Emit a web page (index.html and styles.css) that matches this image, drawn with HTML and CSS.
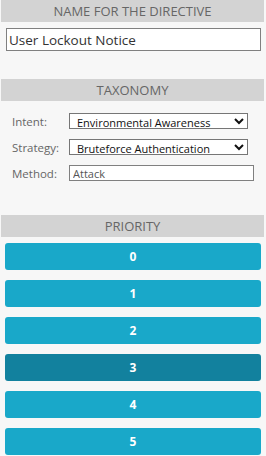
FILE: index.html
```html
<!DOCTYPE html>
<html>
<head>
    <meta charset="utf-8">
    <title>Directive</title>
    <link rel="stylesheet" href="styles.css">
</head>
<body>
    <div class="section">
        <div class="section-title">NAME FOR THE DIRECTIVE</div>
        <input class="name-input" type="text" value="User Lockout Notice">
    </div>

    <div class="section taxonomy">
        <div class="section-title">TAXONOMY</div>
        <div class="tax-rows">
            <div class="tax-row">
                <label>Intent:</label>
                <select class="tax-select">
                    <option>Environmental Awareness</option>
                </select>
            </div>
            <div class="tax-row">
                <label>Strategy:</label>
                <select class="tax-select">
                    <option>Bruteforce Authentication</option>
                </select>
            </div>
            <div class="tax-row">
                <label>Method:</label>
                <input class="tax-input" type="text" value="Attack">
            </div>
        </div>
    </div>

    <div class="section priority">
        <div class="section-title">PRIORITY</div>
        <div class="priority-list">
            <button class="priority-btn">0</button>
            <button class="priority-btn">1</button>
            <button class="priority-btn">2</button>
            <button class="priority-btn active">3</button>
            <button class="priority-btn">4</button>
            <button class="priority-btn">5</button>
        </div>
    </div>
</body>
</html>
```

FILE: styles.css
```css
body {
    margin: 0;
    padding: 0;
    background: #f7f7f7;
    font-family: 'Open Sans', 'Noto Sans', sans-serif;
    width: 266px;
    height: 456px;
    overflow: hidden;
}

.section {
    display: flex;
    flex-direction: column;
}

.section-title {
    height: 22px;
    line-height: 22px;
    margin: 0 2px 0 1px;
    background: #d3d3d3;
    color: #666;
    font-size: 13px;
    text-align: center;
}

.name-input {
    box-sizing: border-box;
    margin: 6px 0 0 6px;
    width: 255px;
    height: 23px;
    padding: 0 2px;
    border: 1px solid #808080;
    background: #fff;
    color: #333;
    font-family: 'Open Sans', sans-serif;
    font-size: 13.5px;
    outline: none;
}

.taxonomy {
    margin-top: 28px;
}

.tax-rows {
    display: flex;
    flex-direction: column;
    gap: 10px;
    padding: 12px 0 0 12px;
}

.tax-row {
    display: flex;
    align-items: center;
    height: 16px;
}

.tax-row label {
    width: 57px;
    color: #666;
    font-size: 11.5px;
}

.tax-select {
    box-sizing: border-box;
    width: 179px;
    height: 16px;
    padding: 0 0 0 3px;
    border: 1px solid #767676;
    border-radius: 0;
    background: #fff;
    color: #111;
    font-family: 'Open Sans', sans-serif;
    font-size: 11px;
}

.tax-input {
    box-sizing: border-box;
    width: 185px;
    height: 16px;
    padding: 0 3px;
    border: 1px solid #808080;
    background: #fff;
    color: #555;
    font-family: 'Open Sans', sans-serif;
    font-size: 11px;
    outline: none;
}

.priority {
    margin-top: 34px;
}

.priority-list {
    display: flex;
    flex-direction: column;
    gap: 10px;
    padding: 6px 5px 0 5px;
}

.priority-btn {
    height: 27px;
    border: none;
    border-radius: 3px;
    background: #19a8c9;
    color: #fff;
    font-family: 'Open Sans', sans-serif;
    font-size: 12px;
    font-weight: bold;
    cursor: pointer;
}

.priority-btn.active {
    background: #12819e;
}
```
